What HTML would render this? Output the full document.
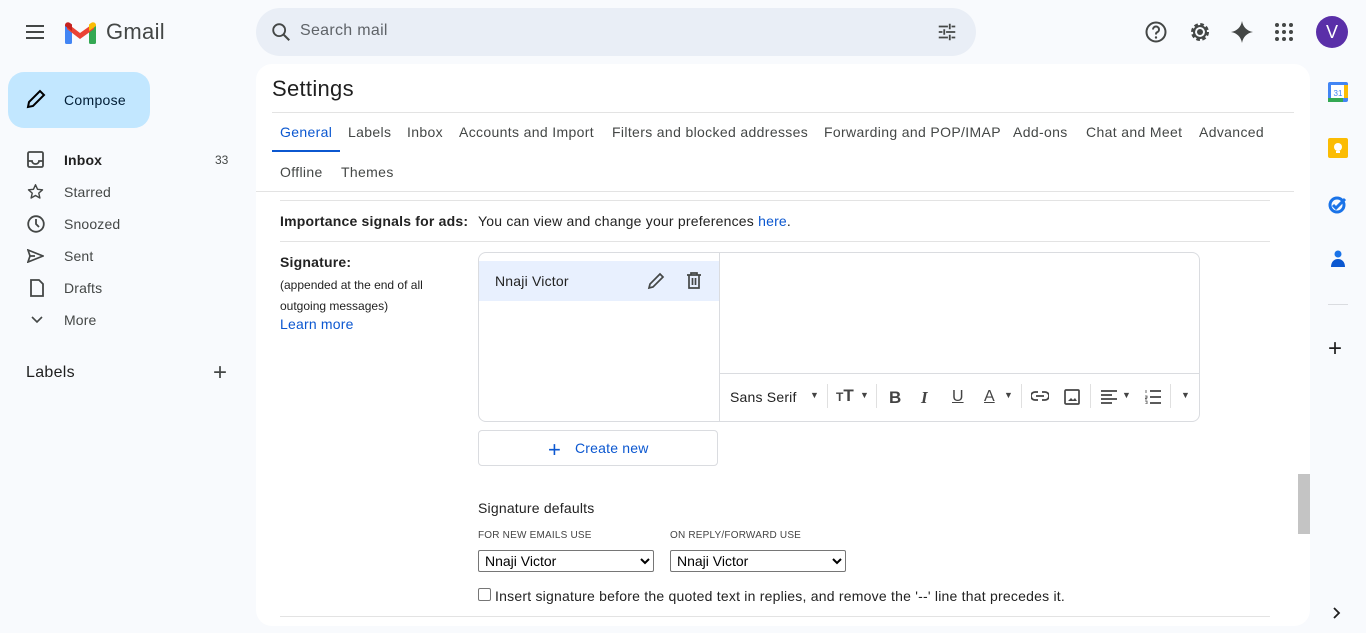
<!DOCTYPE html>
<html><head><meta charset="utf-8"><style>
*{box-sizing:border-box;margin:0;padding:0}
body{width:1366px;height:633px;overflow:hidden;background:#f8fafd;font-family:"Liberation Sans",Arial,sans-serif;color:#1f1f1f;position:relative}
.a{position:absolute}
.nav{position:absolute;left:64px;font-size:14px;color:#444746;letter-spacing:.15px}
.ico{position:absolute;left:27px}
.tab{position:absolute;top:124px;font-size:14px;color:#444746;letter-spacing:.35px}
select{font-family:"Liberation Sans",Arial,sans-serif;font-size:14px;border:1px solid #767676;border-radius:2px;background:#fff;height:22px;color:#000;padding-left:2px}
.tb{position:absolute;top:389px}
.t{letter-spacing:.2px}
</style></head><body>
<svg class="a" style="left:25px;top:22px" width="20" height="20" viewBox="0 0 20 20"><path d="M1 4h18M1 10h18M1 16h18" stroke="#444746" stroke-width="2"/></svg>
<svg class="a" style="left:65px;top:21px" width="31" height="23" viewBox="0 0 31 23"><rect x="0" y="4" width="7" height="19" rx="1.5" fill="#4285f4"/><rect x="24" y="4" width="7" height="19" rx="1.5" fill="#34a853"/><path d="M2 2 L15 12 L29 2 L29 8 L15 18 L2 8Z" fill="#ea4335"/><path d="M0 4 a3 3 0 0 1 5 -2 L7 3.5 V10 L0 5Z" fill="#c5221f"/><path d="M31 4 a3 3 0 0 0 -5 -2 L24 3.5 V10 L31 5Z" fill="#fbbc04"/></svg>
<div class="a" style="left:106px;top:19px;font-size:22px;color:#444746;letter-spacing:.3px">Gmail</div>
<div class="a" style="left:256px;top:8px;width:720px;height:48px;border-radius:24px;background:#e9eef6"></div>
<svg class="a" style="left:270px;top:21px" width="22" height="22" viewBox="0 0 24 24"><circle cx="10" cy="10" r="6.5" fill="none" stroke="#444746" stroke-width="2"/><path d="M15 15l6 6" stroke="#444746" stroke-width="2.2"/></svg>
<div class="a" style="left:300px;top:22px;font-size:16px;color:#5f6368;letter-spacing:.3px">Search mail</div>
<svg class="a" style="left:936px;top:21px" width="22" height="22" viewBox="0 0 24 24"><path d="M3 6h10M17 6h4M3 12h4M11 12h10M3 18h10M17 18h4M15 3v6M9 9v6M15 15v6" stroke="#444746" stroke-width="2" fill="none"/></svg>
<svg class="a" style="left:1144px;top:20px" width="24" height="24" viewBox="0 0 24 24"><circle cx="12" cy="12" r="9.5" fill="none" stroke="#444746" stroke-width="2"/><path d="M9 9.5a3 3 0 1 1 4 2.8c-1 .5-1 1-1 2.2" fill="none" stroke="#444746" stroke-width="2"/><circle cx="12" cy="17.5" r="1.2" fill="#444746"/></svg>
<svg class="a" style="left:1188px;top:20px" width="24" height="24" viewBox="0 0 24 24"><circle cx="12" cy="12" r="7" fill="none" stroke="#444746" stroke-width="4" stroke-dasharray="3.3 2.2"/><circle cx="12" cy="12" r="6" fill="none" stroke="#444746" stroke-width="2"/><circle cx="12" cy="12" r="3" fill="#444746"/></svg>
<svg class="a" style="left:1231px;top:21px" width="22" height="22" viewBox="0 0 22 22"><path d="M11 0C12 6 16 10 22 11 16 12 12 16 11 22 10 16 6 12 0 11 6 10 10 6 11 0Z" fill="#444746"/></svg>
<svg class="a" style="left:1275px;top:23px" width="18" height="18" viewBox="0 0 18 18" fill="#444746"><circle cx="2" cy="2" r="2"/><circle cx="9" cy="2" r="2"/><circle cx="16" cy="2" r="2"/><circle cx="2" cy="9" r="2"/><circle cx="9" cy="9" r="2"/><circle cx="16" cy="9" r="2"/><circle cx="2" cy="16" r="2"/><circle cx="9" cy="16" r="2"/><circle cx="16" cy="16" r="2"/></svg>
<div class="a" style="left:1316px;top:16px;width:32px;height:32px;border-radius:50%;background:#5a2fa8;color:#fff;font-size:18px;text-align:center;line-height:32px">V</div>
<div class="a" style="left:8px;top:72px;width:142px;height:56px;border-radius:16px;background:#c2e7ff"></div>
<svg class="a" style="left:26px;top:89px" width="20" height="20" viewBox="0 0 20 20"><path d="M2 18l1-5L14 2l4 4L7 17z" fill="none" stroke="#000" stroke-width="2"/></svg>
<div class="a" style="left:64px;top:92px;font-size:14px;color:#001d35;letter-spacing:.3px">Compose</div>
<svg class="ico" style="top:151px" width="17" height="17" viewBox="0 0 17 17"><rect x="1" y="1" width="15" height="15" rx="1.5" fill="none" stroke="#444746" stroke-width="1.8"/><path d="M1 10h4a3.5 3 0 0 0 7 0h4" fill="none" stroke="#444746" stroke-width="1.8"/></svg>
<div class="nav" style="top:152px;font-weight:bold;color:#1f1f1f">Inbox</div>
<div class="a" style="left:215px;top:153px;font-size:12px;color:#444746">33</div>
<svg class="ico" style="top:183px" width="17" height="17" viewBox="0 0 24 24"><path d="M12 2.5l2.9 6.4 7 .7-5.3 4.7 1.6 6.9L12 17.6l-6.2 3.6 1.6-6.9L2.1 9.6l7-.7z" fill="none" stroke="#444746" stroke-width="2" stroke-linejoin="round"/></svg><div class="nav" style="top:184px">Starred</div>
<svg class="ico" style="top:215px" width="18" height="18" viewBox="0 0 18 18"><circle cx="9" cy="9" r="7.8" fill="none" stroke="#444746" stroke-width="1.8"/><path d="M9 4v5l3 3" fill="none" stroke="#444746" stroke-width="1.8"/></svg><div class="nav" style="top:216px">Snoozed</div>
<svg class="ico" style="top:249px" width="17" height="14" viewBox="0 0 17 14"><path d="M1 1l15 6-15 6 2-6zM3 7h5" fill="none" stroke="#444746" stroke-width="1.7"/></svg><div class="nav" style="top:248px">Sent</div>
<svg class="ico" style="left:30px;top:279px" width="14" height="18" viewBox="0 0 14 18"><path d="M1 1h8l4 4v12H1z" fill="none" stroke="#444746" stroke-width="1.8"/></svg><div class="nav" style="top:280px">Drafts</div>
<svg class="ico" style="left:31px;top:316px" width="12" height="8" viewBox="0 0 12 8"><path d="M1 1l5 5 5-5" fill="none" stroke="#444746" stroke-width="1.6"/></svg><div class="nav" style="top:312px">More</div>
<div class="a" style="left:26px;top:364px;font-size:16px;color:#1f1f1f;letter-spacing:.3px">Labels</div>
<div class="a" style="left:213px;top:359px;font-size:24px;color:#444746;font-weight:300">+</div>
<div class="a" style="left:256px;top:64px;width:1054px;height:562px;background:#fff;border-radius:16px"></div>
<div class="a" style="left:272px;top:76px;font-size:22px;color:#1f1f1f;letter-spacing:.3px">Settings</div>
<div class="a" style="left:272px;top:112px;width:1022px;height:1px;background:#e3e3e3"></div>
<div class="tab" style="left:280px;color:#0b57d0">General</div>
<div class="a" style="left:272px;top:150px;width:68px;height:2px;background:#0b57d0"></div>
<div class="tab" style="left:348px">Labels</div>
<div class="tab" style="left:407px">Inbox</div>
<div class="tab" style="left:459px">Accounts and Import</div>
<div class="tab" style="left:612px">Filters and blocked addresses</div>
<div class="tab" style="left:824px">Forwarding and POP/IMAP</div>
<div class="tab" style="left:1013px">Add-ons</div>
<div class="tab" style="left:1086px">Chat and Meet</div>
<div class="tab" style="left:1199px">Advanced</div>
<div class="tab" style="left:280px;top:164px">Offline</div>
<div class="tab" style="left:341px;top:164px">Themes</div>
<div class="a" style="left:256px;top:191px;width:1038px;height:1px;background:#e3e3e3"></div>
<div class="a" style="left:280px;top:200px;width:990px;height:1px;background:#e3e3e3"></div>
<div class="a t" style="left:280px;top:213px;font-size:14px;font-weight:bold;color:#222">Importance signals for ads:</div>
<div class="a t" style="left:478px;top:213px;font-size:14px;color:#222">You can view and change your preferences <span style="color:#0b57d0">here</span>.</div>
<div class="a" style="left:280px;top:241px;width:990px;height:1px;background:#e3e3e3"></div>
<div class="a t" style="left:280px;top:254px;font-size:14px;font-weight:bold;color:#222">Signature:</div>
<div class="a" style="left:280px;top:275px;font-size:12px;color:#222;line-height:21px">(appended at the end of all<br>outgoing messages)</div>
<div class="a t" style="left:280px;top:316px;font-size:14px;color:#0b57d0">Learn more</div>
<div class="a" style="left:478px;top:252px;width:722px;height:170px;border:1px solid #dadce0;border-radius:8px"></div>
<div class="a" style="left:719px;top:253px;width:1px;height:168px;background:#dadce0"></div>
<div class="a" style="left:720px;top:373px;width:479px;height:1px;background:#dadce0"></div>
<div class="a" style="left:479px;top:261px;width:240px;height:40px;background:#e8f0fe"></div>
<div class="a t" style="left:495px;top:273px;font-size:14px;color:#222">Nnaji Victor</div>
<svg class="a" style="left:647px;top:272px" width="18" height="18" viewBox="0 0 18 18"><path d="M2 16l1-4L13 2l3 3L6 15z" fill="none" stroke="#444746" stroke-width="1.7"/></svg>
<svg class="a" style="left:686px;top:272px" width="16" height="17" viewBox="0 0 16 17"><path d="M1 3h14M5 3V1h6v2M3 3v13h10V3M6.5 6v7M9.5 6v7" fill="none" stroke="#444746" stroke-width="1.7"/></svg>
<div class="a t" style="left:730px;top:389px;font-size:14px;color:#222">Sans Serif</div>
<div class="tb" style="left:810px;top:390px;font-size:9px;color:#444">▼</div>
<div class="a" style="left:827px;top:384px;width:1px;height:24px;background:#e0e0e0"></div>
<div class="tb" style="left:836px;top:386px;font-size:17px;font-weight:bold;color:#444"><span style="font-size:12px">T</span>T</div><div class="tb" style="left:860px;top:390px;font-size:9px;color:#444">▼</div>
<div class="a" style="left:876px;top:384px;width:1px;height:24px;background:#e0e0e0"></div>
<div class="tb" style="left:889px;top:388px;font-size:17px;font-weight:bold;color:#444">B</div>
<div class="tb" style="left:921px;top:388px;font-size:17px;font-style:italic;font-weight:bold;color:#444;font-family:'Liberation Serif',serif">I</div>
<div class="tb" style="left:952px;top:388px;font-size:16px;text-decoration:underline;color:#444">U</div>
<div class="tb" style="left:984px;top:388px;font-size:16px;text-decoration:underline;color:#444">A</div><div class="tb" style="left:1004px;top:390px;font-size:9px;color:#444">▼</div>
<div class="a" style="left:1021px;top:384px;width:1px;height:24px;background:#e0e0e0"></div>
<svg class="a" style="left:1031px;top:391px" width="18" height="10" viewBox="0 0 18 10"><path d="M7 1H4a4 4 0 0 0 0 8h3M11 1h3a4 4 0 0 1 0 8h-3M5 5h8" fill="none" stroke="#444" stroke-width="1.8"/></svg>
<svg class="a" style="left:1064px;top:389px" width="16" height="16" viewBox="0 0 16 16"><rect x="1" y="1" width="14" height="14" rx="1" fill="none" stroke="#444" stroke-width="1.7"/><path d="M4 12l3-3 2 2 2-2 2 3z" fill="#444"/></svg>
<div class="a" style="left:1090px;top:384px;width:1px;height:24px;background:#e0e0e0"></div>
<svg class="a" style="left:1101px;top:390px" width="16" height="14" viewBox="0 0 16 14"><path d="M0 1h16M0 5h11M0 9h16M0 13h11" stroke="#444" stroke-width="1.7"/></svg><div class="tb" style="left:1122px;top:390px;font-size:9px;color:#444">▼</div>
<svg class="a" style="left:1145px;top:390px" width="16" height="14" viewBox="0 0 16 14"><path d="M5 1h11M5 7h11M5 13h11" stroke="#444" stroke-width="1.7"/><path d="M1 0v3M0 6h2v2H0v1h2M0 11h2v3H0" stroke="#444" stroke-width=".8" fill="none"/></svg>
<div class="a" style="left:1170px;top:384px;width:1px;height:24px;background:#e0e0e0"></div>
<div class="tb" style="left:1181px;top:390px;font-size:9px;color:#444">▼</div>
<div class="a" style="left:478px;top:430px;width:240px;height:36px;border:1px solid #dadce0;border-radius:4px"></div>
<div class="a" style="left:548px;top:437px;font-size:22px;color:#0b57d0;font-weight:300">+</div>
<div class="a t" style="left:575px;top:440px;font-size:14px;color:#0b57d0">Create new</div>
<div class="a t" style="left:478px;top:500px;font-size:14px;color:#222">Signature defaults</div>
<div class="a" style="left:478px;top:530px;font-size:10px;color:#444;letter-spacing:.2px">FOR NEW EMAILS USE</div>
<div class="a" style="left:670px;top:530px;font-size:10px;color:#444;letter-spacing:.2px">ON REPLY/FORWARD USE</div>
<select class="a" style="left:478px;top:550px;width:176px"><option>Nnaji Victor</option></select>
<select class="a" style="left:670px;top:550px;width:176px"><option>Nnaji Victor</option></select>
<div class="a" style="left:478px;top:588px;width:13px;height:13px;border:1px solid #767676;border-radius:2px;background:#fff"></div>
<div class="a" style="left:495px;top:588px;font-size:14px;color:#222;letter-spacing:.22px">Insert signature before the quoted text in replies, and remove the '--' line that precedes it.</div>
<div class="a" style="left:280px;top:616px;width:990px;height:1px;background:#e3e3e3"></div>
<div class="a" style="left:1298px;top:474px;width:12px;height:60px;background:#c4c4c4"></div>
<svg class="a" style="left:1328px;top:82px" width="20" height="20" viewBox="0 0 20 20"><rect x="0" y="0" width="20" height="20" rx="2" fill="#4285f4"/><rect x="3" y="3" width="14" height="13" fill="#fff"/><rect x="0" y="16" width="15" height="4" fill="#34a853"/><rect x="16" y="3" width="4" height="13" fill="#fbbc04"/><text x="10" y="14" font-size="8" text-anchor="middle" fill="#4285f4" font-family="Liberation Sans">31</text></svg>
<svg class="a" style="left:1328px;top:138px" width="20" height="20" viewBox="0 0 20 20"><rect width="20" height="20" rx="2" fill="#fbbc04"/><circle cx="10" cy="9" r="4" fill="#fff"/><rect x="8" y="13" width="4" height="2" fill="#fff"/></svg>
<svg class="a" style="left:1328px;top:194px" width="20" height="20" viewBox="0 0 20 20"><circle cx="9" cy="11" r="7" fill="none" stroke="#1a73e8" stroke-width="3"/><path d="M5 11l3 3 9-9" fill="none" stroke="#1a73e8" stroke-width="3"/></svg>
<svg class="a" style="left:1330px;top:250px" width="16" height="18" viewBox="0 0 16 18"><circle cx="8" cy="4" r="3.5" fill="#1a73e8"/><path d="M1 17c0-5 3-8 7-8s7 3 7 8z" fill="#0b57d0"/></svg>
<div class="a" style="left:1328px;top:304px;width:20px;height:1px;background:#dadce0"></div>
<div class="a" style="left:1328px;top:335px;font-size:24px;color:#1f1f1f">+</div>
<svg class="a" style="left:1333px;top:607px" width="8" height="12" viewBox="0 0 8 12"><path d="M1 1l5 5-5 5" fill="none" stroke="#1f1f1f" stroke-width="1.8"/></svg>
</body></html>
